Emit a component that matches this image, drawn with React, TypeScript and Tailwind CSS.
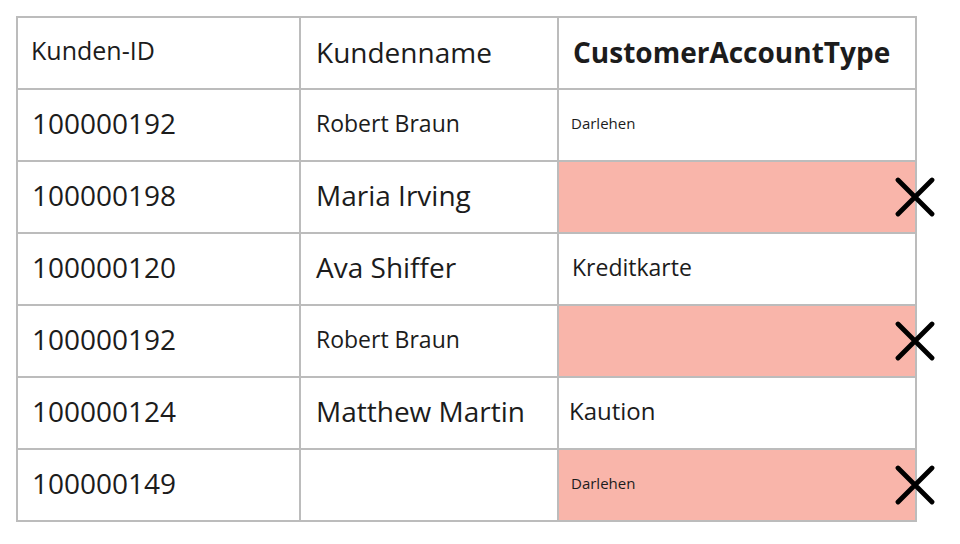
import React from "react";

type Cell = { text: string; cls?: string };
type Row = { id: string; name: Cell; type: Cell; bad?: boolean };

const rows: Row[] = [
  { id: "100000192", name: { text: "Robert Braun", cls: "text-[23px]" }, type: { text: "Darlehen", cls: "text-[15px] pl-[12px]" } },
  { id: "100000198", name: { text: "Maria Irving" }, type: { text: "" }, bad: true },
  { id: "100000120", name: { text: "Ava Shiffer" }, type: { text: "Kreditkarte", cls: "text-[23px] pl-[13px]" } },
  { id: "100000192", name: { text: "Robert Braun", cls: "text-[23px]" }, type: { text: "" }, bad: true },
  { id: "100000124", name: { text: "Matthew Martin" }, type: { text: "Kaution", cls: "text-[24px] pl-[10px]" } },
  { id: "100000149", name: { text: "" }, type: { text: "Darlehen", cls: "text-[15px] pl-[12px]" }, bad: true },
];

function Cross() {
  return (
    <svg
      viewBox="0 0 40 40"
      className="absolute right-[-20px] top-1/2 -translate-y-1/2 w-[40px] h-[40px]"
    >
      <path d="M3 3 L37 37 M37 3 L3 37" stroke="#000" strokeWidth="4.8" strokeLinecap="round" />
    </svg>
  );
}

export default function App() {
  return (
    <div className="w-[960px] h-[544px] bg-white pl-[16px] pt-[16px] font-['Open_Sans',sans-serif] text-[#1c1c1c]">
      <table className="border-collapse table-fixed w-[899px]">
        <colgroup>
          <col className="w-[283px]" />
          <col className="w-[258px]" />
          <col className="w-[358px]" />
        </colgroup>
        <thead>
          <tr className="h-[72px]">
            <th className="border-2 border-[#bcbcbc] text-left font-normal text-[25px] pl-[13px] pb-[4px] align-middle">
              Kunden-ID
            </th>
            <th className="border-2 border-[#bcbcbc] text-left font-normal text-[28px] pl-[15px] pb-[3px] align-middle">
              Kundenname
            </th>
            <th className="border-2 border-[#bcbcbc] text-left font-bold text-[28px] pl-[14px] pb-[3px] align-middle">
              CustomerAccountType
            </th>
          </tr>
        </thead>
        <tbody>
          {rows.map((r, i) => (
            <tr key={i} className="h-[72px]">
              <td className="border-2 border-[#bcbcbc] text-[28px] pl-[14px] pb-[4px] align-middle">{r.id}</td>
              <td className={`border-2 border-[#bcbcbc] pl-[15px] pb-[4px] align-middle ${r.name.cls ?? "text-[28px]"}`}>
                {r.name.text}
              </td>
              <td
                className={`relative border-2 border-[#bcbcbc] pb-[4px] align-middle ${r.bad ? "bg-[#f9b5aa]" : ""} ${r.type.cls ?? ""}`}
              >
                {r.type.text}
                {r.bad && <Cross />}
              </td>
            </tr>
          ))}
        </tbody>
      </table>
    </div>
  );
}
